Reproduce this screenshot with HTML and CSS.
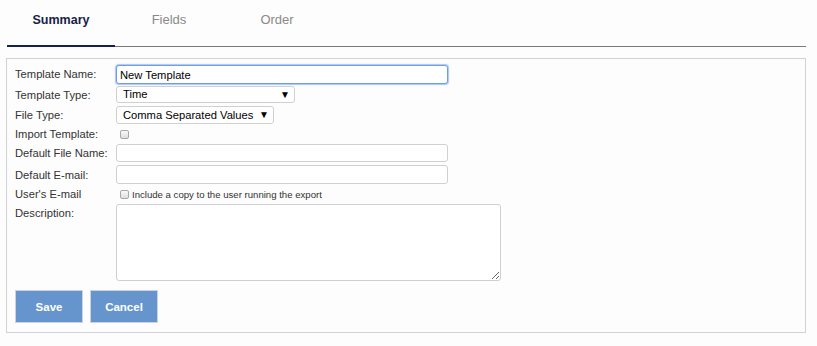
FILE: index.html
```html
<!DOCTYPE html>
<html>
<head>
    <title>Export Template</title>
    <link rel="stylesheet" href="styles.css">
</head>
<body>
    <!-- Pestañas -->
    <div class="tabs">
        <div class="tab tab-activa">Summary</div>
        <div class="tab">Fields</div>
        <div class="tab">Order</div>
    </div>

    <!-- Formulario -->
    <div class="panel">
        <div class="form-grid">
            <label class="etiqueta" for="nombre">Template Name:</label>
            <div class="campo"><input id="nombre" class="texto texto-foco" type="text" value="New Template"></div>

            <label class="etiqueta">Template Type:</label>
            <div class="campo">
                <div class="selector selector-tipo">
                    <span>Time</span>
                    <span class="flecha">&#9660;</span>
                </div>
            </div>

            <label class="etiqueta">File Type:</label>
            <div class="campo">
                <div class="selector selector-archivo">
                    <span>Comma Separated Values</span>
                    <span class="flecha">&#9660;</span>
                </div>
            </div>

            <label class="etiqueta">Import Template:</label>
            <div class="campo"><input class="check" type="checkbox"></div>

            <label class="etiqueta">Default File Name:</label>
            <div class="campo"><input class="texto" type="text"></div>

            <label class="etiqueta">Default E-mail:</label>
            <div class="campo"><input class="texto texto-alto" type="text"></div>

            <label class="etiqueta">User's E-mail</label>
            <div class="campo">
                <input class="check" type="checkbox">
                <span class="nota">Include a copy to the user running the export</span>
            </div>

            <label class="etiqueta etiqueta-arriba">Description:</label>
            <div class="campo"><textarea class="descripcion"></textarea></div>
        </div>

        <div class="botones">
            <button class="boton">Save</button>
            <button class="boton">Cancel</button>
        </div>
    </div>
</body>
</html>
```

FILE: styles.css
```css
body {
    font-family: "Liberation Sans", Arial, sans-serif;
    background-color: #fcfdfc;
    margin: 0;
    padding: 0;
    color: #333;
}

/* Pestañas superiores */
.tabs {
    display: flex;
    margin-left: 7px;
    width: 799px;
    height: 46px;
    border-bottom: 1px solid #7a7a7a;
}

.tab {
    width: 108px;
    box-sizing: border-box;
    padding-top: 12px;
    text-align: center;
    font-size: 13px;
    line-height: 16px;
    color: #8a8a8a;
}

.tab-activa {
    height: 47px;
    margin-bottom: -1px;
    border-bottom: 2px solid #17224a;
    color: #17224a;
    font-size: 12.5px;
    font-weight: bold;
}

/* Panel del formulario */
.panel {
    margin: 11px 0 0 6px;
    width: 800px;
    box-sizing: border-box;
    border: 1px solid #d2d2d2;
    padding: 6px 8px 9px 8px;
}

.form-grid {
    display: grid;
    grid-template-columns: 101px 1fr;
    row-gap: 3px;
}

.etiqueta {
    font-size: 11.2px;
    line-height: 14px;
    color: #333;
    align-self: center;
}

.etiqueta-arriba {
    align-self: start;
    padding-top: 2px;
}

.campo {
    display: flex;
    align-items: center;
}

.texto {
    width: 332px;
    height: 18px;
    box-sizing: border-box;
    border: 1px solid #d0d0d0;
    border-radius: 3px;
    background-color: #fff;
    padding: 0 3px;
    font-family: "Liberation Sans", Arial, sans-serif;
    font-size: 11.2px;
    color: #000;
    outline: none;
}

.texto-foco {
    height: 19px;
    margin-bottom: -1px;
    border-color: #6f9ee6;
    box-shadow: 0 0 1px 1px #a8c6f4;
}

.texto-alto {
    height: 19px;
}

.selector {
    position: relative;
    height: 17px;
    box-sizing: border-box;
    border: 1px solid #d0d0d0;
    border-radius: 3px;
    background-color: #fff;
    padding-left: 6px;
    font-size: 11.2px;
    line-height: 15px;
    color: #000;
}

.selector-tipo {
    width: 179px;
}

.selector-archivo {
    width: 158px;
    height: 18px;
    line-height: 16px;
}

.flecha {
    position: absolute;
    right: 4px;
    top: 0;
    font-size: 10px;
}

.check {
    appearance: none;
    width: 9px;
    height: 9px;
    margin: 0 0 0 4px;
    border: 1px solid #a8a8a8;
    border-radius: 2px;
    background: linear-gradient(#fafafa, #dedede);
}

.nota {
    font-size: 9.6px;
    color: #333;
    margin-left: 3px;
}

.descripcion {
    width: 385px;
    height: 77px;
    box-sizing: border-box;
    border: 1px solid #d0d0d0;
    border-radius: 3px;
    background-color: #fff;
    margin: 0;
}

/* Botones */
.botones {
    display: flex;
    gap: 7px;
    margin-top: 9px;
}

.boton {
    width: 68px;
    height: 33px;
    border: 1px solid #ccd3dd;
    background-color: #6694cd;
    color: #fff;
    font-family: "Liberation Sans", Arial, sans-serif;
    font-size: 11.5px;
    font-weight: bold;
    padding: 0;
}
```
